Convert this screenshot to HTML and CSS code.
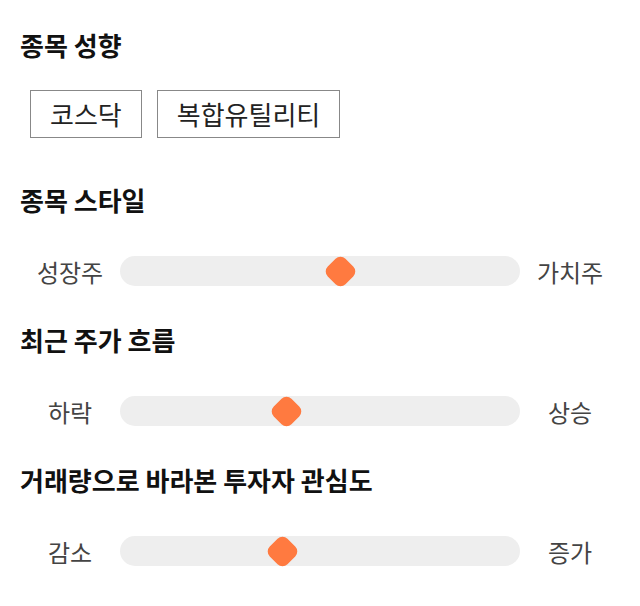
FILE: index.html
```html
<html>

<head>
  <meta charset="utf-8">
  <link rel="stylesheet" href="styles.css">
  <title>
    종목 성향
  </title>
</head>

<body>
  <div id="survey">
    <div class="section">
      <h2 class="title">종목 성향</h2>
      <div class="tags">
        <div class="tag">코스닥</div>
        <div class="tag">복합유틸리티</div>
      </div>
    </div>

    <div class="section">
      <h2 class="title">종목 스타일</h2>
      <div class="slider-row">
        <div class="side">성장주</div>
        <div class="track">
          <div class="thumb" style="left: 55%"></div>
        </div>
        <div class="side">가치주</div>
      </div>
    </div>

    <div class="section">
      <h2 class="title">최근 주가 흐름</h2>
      <div class="slider-row">
        <div class="side">하락</div>
        <div class="track">
          <div class="thumb" style="left: 41.5%"></div>
        </div>
        <div class="side">상승</div>
      </div>
    </div>

    <div class="section">
      <h2 class="title">거래량으로 바라본 투자자 관심도</h2>
      <div class="slider-row">
        <div class="side">감소</div>
        <div class="track">
          <div class="thumb" style="left: 40.5%"></div>
        </div>
        <div class="side">증가</div>
      </div>
    </div>
  </div>
</body>

</html>
```

FILE: styles.css
```css
body {
  margin: 0;
  background: #ffffff;
  font-family: 'Noto Sans CJK KR', 'Noto Sans', sans-serif;
  color: #111111;
}

#survey {
  padding: 27px 20px 0 20px;
}

.section + .section {
  margin-top: 36px;
}

.title {
  margin: 0;
  font-size: 26px;
  line-height: 36px;
  font-weight: 700;
}

.tags {
  display: flex;
  gap: 15px;
  margin-top: 27px;
  margin-bottom: 44px;
  padding-left: 10px;
}

.tag {
  border: 1px solid #888888;
  padding: 0 19px;
  height: 46px;
  line-height: 46px;
  font-size: 26px;
  color: #222222;
}

.slider-row {
  display: flex;
  align-items: center;
  height: 30px;
  margin-top: 38px;
}

.side {
  width: 100px;
  text-align: center;
  font-size: 24px;
  color: #444444;
}

.track {
  position: relative;
  flex: 1;
  height: 30px;
  border-radius: 15px;
  background: #eeeeee;
}

.thumb {
  position: absolute;
  top: 2.5px;
  width: 25px;
  height: 25px;
  margin-left: -12.5px;
  border-radius: 7px;
  background: #ff7a40;
  transform: rotate(45deg);
}
```
